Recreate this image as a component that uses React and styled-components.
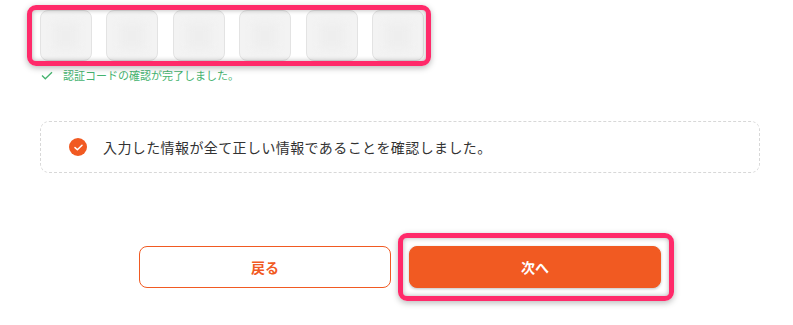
import styled, { createGlobalStyle } from 'styled-components';

const GlobalStyle = createGlobalStyle`
  html, body {
    margin: 0;
    padding: 0;
    background: #ffffff;
    font-family: "Noto Sans CJK JP", "Noto Sans", sans-serif;
  }
`

const Page = styled.main`
  width: 720px;
  padding: 10px 0 38px 40px;
  display: flex;
  flex-direction: column;
`

const Marked = styled.div`
  position: relative;
  display: inline-flex;
  align-self: ${p => p.$start ? 'flex-start' : 'auto'};
`

const Highlight = styled.span`
  position: absolute;
  top: ${p => p.$t}px;
  bottom: ${p => p.$b}px;
  left: ${p => p.$l}px;
  right: ${p => p.$r}px;
  border: 5px solid #ff2a6a;
  border-radius: 9px;
  box-shadow: 0 2px 6px rgba(0, 0, 0, 0.28), inset 0 0 5px rgba(0, 0, 0, 0.3);
  pointer-events: none;
`

const CodeRow = styled.div`
  display: flex;
  gap: 14.4px;
`

const CodeBox = styled.div`
  width: 52px;
  height: 51px;
  box-sizing: border-box;
  border: 1px solid #e3e3e3;
  border-radius: 8px;
  background: #f3f3f3;
  display: flex;
  align-items: center;
  justify-content: center;
  overflow: hidden;
`

const Blurred = styled.span`
  width: 24px;
  height: 26px;
  background: #eeeeee;
  filter: blur(4px);
`

const Success = styled.p`
  margin: 7px 0 0 1px;
  display: flex;
  align-items: center;
  gap: 10px;
  font-size: 11px;
  color: #45b36f;
  line-height: 14px;
`

const ConfirmBox = styled.div`
  margin-top: 39px;
  height: 52px;
  box-sizing: border-box;
  border: 1px dashed #d8d8d8;
  border-radius: 9px;
  display: flex;
  align-items: center;
  padding-left: 28px;
  gap: 16px;
  font-size: 14px;
  letter-spacing: 0.4px;
  color: #333333;
`

const CheckCircle = styled.span`
  width: 18px;
  height: 18px;
  border-radius: 50%;
  background: #f15a22;
  display: flex;
  align-items: center;
  justify-content: center;
  flex-shrink: 0;
`

const Actions = styled.div`
  margin-top: 73px;
  display: flex;
  justify-content: center;
  gap: 18px;
`

const Button = styled.button`
  width: 252px;
  height: 42px;
  box-sizing: border-box;
  border-radius: 8px;
  border: 1px solid #f15a22;
  background: ${p => p.$primary ? '#f15a22' : '#ffffff'};
  color: ${p => p.$primary ? '#ffffff' : '#f15a22'};
  font-family: inherit;
  font-size: 14px;
  font-weight: 700;
  cursor: pointer;
  box-shadow: ${p => p.$primary ? '0 1px 3px rgba(0,0,0,0.25)' : 'none'};
`

export default function App() {
  return (
    <>
      <GlobalStyle />
      <Page>
        <Marked $start>
          <CodeRow>
            {[0, 1, 2, 3, 4, 5].map(i => (
              <CodeBox key={i}><Blurred /></CodeBox>
            ))}
          </CodeRow>
          <Highlight $t={-5} $b={-5} $l={-13} $r={-7} />
        </Marked>
        <Success>
          <svg width="12" height="9" viewBox="0 0 12 9" fill="none">
            <path d="M1 4.5 L4.3 7.8 L11 1.2" stroke="#45b36f" strokeWidth="1.3" />
          </svg>
          認証コードの確認が完了しました。
        </Success>
        <ConfirmBox>
          <CheckCircle>
            <svg width="9" height="7" viewBox="0 0 9 7" fill="none">
              <path d="M1 3.6 L3.4 5.8 L8 1.2" stroke="#fff" strokeWidth="1.5" strokeLinecap="round" strokeLinejoin="round" />
            </svg>
          </CheckCircle>
          入力した情報が全て正しい情報であることを確認しました。
        </ConfirmBox>
        <Actions>
          <Button>戻る</Button>
          <Marked>
            <Button $primary>次へ</Button>
            <Highlight $t={-13} $b={-13} $l={-11} $r={-13} />
          </Marked>
        </Actions>
      </Page>
    </>
  )
}
